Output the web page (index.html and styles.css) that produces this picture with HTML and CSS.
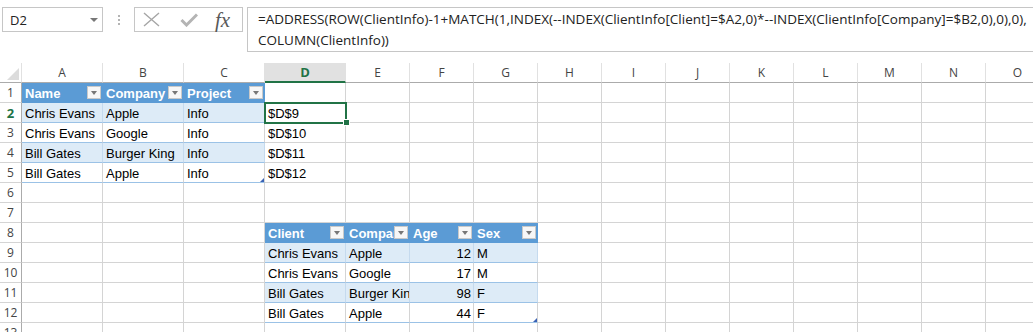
FILE: index.html
```html
<!DOCTYPE html>
<html lang="en">
<head>
    <meta charset="UTF-8">
    <title>ClientInfo - Excel</title>
    <link rel="stylesheet" href="styles.css">
</head>
<body>

    <!-- Barra de formulas -->
    <div class="bar">
        <div class="namebox"><span>D2</span><span class="nb-arrow"></span></div>
        <div class="grip"><i></i><i></i><i></i></div>
        <div class="fxbox">
            <svg class="ic-x" width="17" height="15" viewBox="0 0 17 15"><path d="M1 1 L16 14 M16 1 L1 14" stroke="#a6a6a6" stroke-width="1.4" fill="none"/></svg>
            <svg class="ic-ok" width="18" height="15" viewBox="0 0 18 15"><path d="M1.5 8 L6.5 13 L17 2.5" stroke="#b4b4b4" stroke-width="3" fill="none"/></svg>
            <span class="ic-fx">fx</span>
        </div>
        <div class="formula">=ADDRESS(ROW(ClientInfo)-1+MATCH(1,INDEX(--INDEX(ClientInfo[Client]=$A2,0)*--INDEX(ClientInfo[Company]=$B2,0),0),0),<br>COLUMN(ClientInfo))</div>
    </div>

    <!-- Hoja -->
    <table class="sheet">
        <colgroup>
            <col class="w-rh">
            <col class="w-wide" span="4">
            <col class="w-std" span="11">
        </colgroup>
        <tr class="cols">
            <td class="corner"><span class="tri"></span></td>
            <td>A</td><td>B</td><td>C</td><td class="cur">D</td><td>E</td><td>F</td><td>G</td><td>H</td><td>I</td><td>J</td><td>K</td><td>L</td><td>M</td><td>N</td><td>O</td>
        </tr>
        <tr>
            <td class="rh">1</td>
            <td class="th"><div class="hd"><span class="t">Name</span><span class="dd"></span></div></td>
            <td class="th"><div class="hd"><span class="t">Company</span><span class="dd"></span></div></td>
            <td class="th"><div class="hd"><span class="t">Project</span><span class="dd"></span></div></td>
            <td></td><td></td><td></td><td></td><td></td><td></td><td></td><td></td><td></td><td></td><td></td><td></td>
        </tr>
        <tr>
            <td class="rh cur">2</td>
            <td class="band">Chris Evans</td><td class="band">Apple</td><td class="band">Info</td>
            <td class="sel">$D$9</td>
            <td></td><td></td><td></td><td></td><td></td><td></td><td></td><td></td><td></td><td></td><td></td>
        </tr>
        <tr>
            <td class="rh">3</td>
            <td class="tb">Chris Evans</td><td class="tb">Google</td><td class="tb">Info</td>
            <td>$D$10</td>
            <td></td><td></td><td></td><td></td><td></td><td></td><td></td><td></td><td></td><td></td><td></td>
        </tr>
        <tr>
            <td class="rh">4</td>
            <td class="band">Bill Gates</td><td class="band">Burger King</td><td class="band">Info</td>
            <td>$D$11</td>
            <td></td><td></td><td></td><td></td><td></td><td></td><td></td><td></td><td></td><td></td><td></td>
        </tr>
        <tr>
            <td class="rh">5</td>
            <td class="tb">Bill Gates</td><td class="tb">Apple</td><td class="tb last">Info</td>
            <td>$D$12</td>
            <td></td><td></td><td></td><td></td><td></td><td></td><td></td><td></td><td></td><td></td><td></td>
        </tr>
        <tr>
            <td class="rh">6</td>
            <td></td><td></td><td></td><td></td><td></td><td></td><td></td><td></td><td></td><td></td><td></td><td></td><td></td><td></td><td></td>
        </tr>
        <tr>
            <td class="rh">7</td>
            <td></td><td></td><td></td><td></td><td></td><td></td><td></td><td></td><td></td><td></td><td></td><td></td><td></td><td></td><td></td>
        </tr>
        <tr>
            <td class="rh">8</td>
            <td></td><td></td><td></td>
            <td class="th"><div class="hd"><span class="t">Client</span><span class="dd"></span></div></td>
            <td class="th"><div class="hd"><span class="t">Company</span><span class="dd"></span></div></td>
            <td class="th"><div class="hd"><span class="t">Age</span><span class="dd"></span></div></td>
            <td class="th"><div class="hd"><span class="t">Sex</span><span class="dd"></span></div></td>
            <td></td><td></td><td></td><td></td><td></td><td></td><td></td><td></td>
        </tr>
        <tr>
            <td class="rh">9</td>
            <td></td><td></td><td></td>
            <td class="band">Chris Evans</td><td class="band">Apple</td><td class="band num">12</td><td class="band">M</td>
            <td></td><td></td><td></td><td></td><td></td><td></td><td></td><td></td>
        </tr>
        <tr>
            <td class="rh">10</td>
            <td></td><td></td><td></td>
            <td class="tb">Chris Evans</td><td class="tb">Google</td><td class="tb num">17</td><td class="tb">M</td>
            <td></td><td></td><td></td><td></td><td></td><td></td><td></td><td></td>
        </tr>
        <tr>
            <td class="rh">11</td>
            <td></td><td></td><td></td>
            <td class="band">Bill Gates</td><td class="band">Burger King</td><td class="band num">98</td><td class="band">F</td>
            <td></td><td></td><td></td><td></td><td></td><td></td><td></td><td></td>
        </tr>
        <tr>
            <td class="rh">12</td>
            <td></td><td></td><td></td>
            <td class="tb">Bill Gates</td><td class="tb">Apple</td><td class="tb num">44</td><td class="tb last">F</td>
            <td></td><td></td><td></td><td></td><td></td><td></td><td></td><td></td>
        </tr>
        <tr>
            <td class="rh">13</td>
            <td></td><td></td><td></td><td></td><td></td><td></td><td></td><td></td><td></td><td></td><td></td><td></td><td></td><td></td><td></td>
        </tr>
    </table>

</body>
</html>
```

FILE: styles.css
```css
body {
    margin: 0;
    background: #fff;
    overflow: hidden;
    font-family: "Liberation Sans", Arial, sans-serif;
}

/* barra superior */
.bar {
    display: flex;
    align-items: flex-start;
    height: 63px;
    padding-top: 7px;
    box-sizing: border-box;
}
.bar > * {
    flex: none;
}
.namebox {
    margin-left: 2px;
    width: 101px;
    height: 25px;
    box-sizing: border-box;
    border: 1px solid #c6c6c6;
    display: flex;
    align-items: center;
    justify-content: space-between;
    padding: 0 4px 0 7px;
    font: 13px "Open Sans", sans-serif;
    color: #222;
}
.nb-arrow {
    width: 0;
    height: 0;
    border-left: 4px solid transparent;
    border-right: 4px solid transparent;
    border-top: 4px solid #777;
}
.grip {
    width: 31px;
    display: flex;
    flex-direction: column;
    align-items: center;
    gap: 2px;
    padding-top: 8px;
}
.grip i {
    width: 2px;
    height: 2px;
    background: #b4b4b4;
}
.fxbox {
    width: 109px;
    height: 25px;
    box-sizing: border-box;
    border: 1px solid #c6c6c6;
    display: flex;
    align-items: center;
    padding-left: 8px;
}
.ic-ok {
    margin-left: 20px;
}
.ic-fx {
    margin-left: 17px;
    font: italic 21px "Liberation Serif", serif;
    color: #595959;
    line-height: 20px;
}
.formula {
    margin-left: 4px;
    width: 800px;
    height: 45px;
    box-sizing: border-box;
    border: 1px solid #c6c6c6;
    border-right: none;
    padding: 1px 0 0 10px;
    font: 13.5px "Open Sans", sans-serif;
    line-height: 21px;
    color: #222;
    white-space: nowrap;
}

/* hoja */
.sheet {
    border-collapse: separate;
    border-spacing: 0;
    table-layout: fixed;
    width: 1050px;
}
.w-rh { width: 22px; }
.w-wide { width: 81px; }
.w-std { width: 64px; }

.sheet td {
    height: 20px;
    box-sizing: border-box;
    padding: 1px 3px 0;
    border-right: 1px solid #d4d4d4;
    border-bottom: 1px solid #d4d4d4;
    white-space: nowrap;
    overflow: hidden;
    font-size: 13px;
    line-height: 17px;
    vertical-align: bottom;
    color: #000;
}
.sheet .cols td {
    height: 19px;
    padding: 0;
    text-align: center;
    vertical-align: middle;
    font: 12px "Open Sans", sans-serif;
    color: #444;
    border-right-color: #e1e1e1;
    border-bottom-color: #ababab;
}
.sheet .cols td.cur {
    background: #e1e1e1;
    color: #217346;
    font-weight: bold;
    font-size: 13px;
    border-bottom: 2px solid #217346;
}
.sheet .corner {
    position: relative;
}
.tri {
    position: absolute;
    right: 2px;
    bottom: 2px;
    width: 0;
    height: 0;
    border-left: 12px solid transparent;
    border-bottom: 12px solid #dcdcdc;
}
.sheet td.rh {
    padding: 0;
    text-align: center;
    font: 12px "Open Sans", sans-serif;
    line-height: 18px;
    color: #444;
    border-right-color: #ababab;
}
.sheet td.rh.cur {
    color: #217346;
    font-weight: bold;
    font-size: 13px;
}

/* tablas */
.sheet td.th {
    background: #5b9bd5;
    border-right-color: #5b9bd5;
    border-bottom-color: #5b9bd5;
    color: #fff;
    font-weight: bold;
    padding: 0 1px 0 3px;
}
.hd {
    display: flex;
    align-items: center;
    height: 19px;
}
.hd .t {
    flex: 1 1 auto;
    min-width: 0;
    overflow: hidden;
    padding-top: 2px;
}
.dd {
    flex: none;
    position: relative;
    width: 14px;
    height: 13px;
    box-sizing: border-box;
    background: #f7f7f7;
    border: 1px solid #c9c9c9;
}
.dd::after {
    content: "";
    position: absolute;
    left: 3px;
    top: 4px;
    border-left: 3.5px solid transparent;
    border-right: 3.5px solid transparent;
    border-top: 4px solid #777;
}
.sheet td.band {
    background: #ddebf7;
    border-bottom-color: #9bc2e6;
    border-right-color: #c5daee;
}
.sheet td.tb {
    border-bottom-color: #9bc2e6;
}
.sheet td.num {
    text-align: right;
    padding-right: 2px;
}
.sheet td.last {
    position: relative;
}
.sheet td.last::after {
    content: "";
    position: absolute;
    right: 0;
    bottom: 0;
    border-left: 4px solid transparent;
    border-bottom: 4px solid #3a62b5;
}

/* celda activa */
.sheet td.sel {
    position: relative;
    overflow: visible;
}
.sheet td.sel::after {
    content: "";
    position: absolute;
    left: -1px;
    top: -1px;
    width: 83px;
    height: 22px;
    box-sizing: border-box;
    border: 2px solid #217346;
}
.sheet td.sel::before {
    content: "";
    position: absolute;
    left: 78px;
    top: 16px;
    width: 5px;
    height: 5px;
    background: #217346;
    border: 1px solid #fff;
    z-index: 1;
}
```
